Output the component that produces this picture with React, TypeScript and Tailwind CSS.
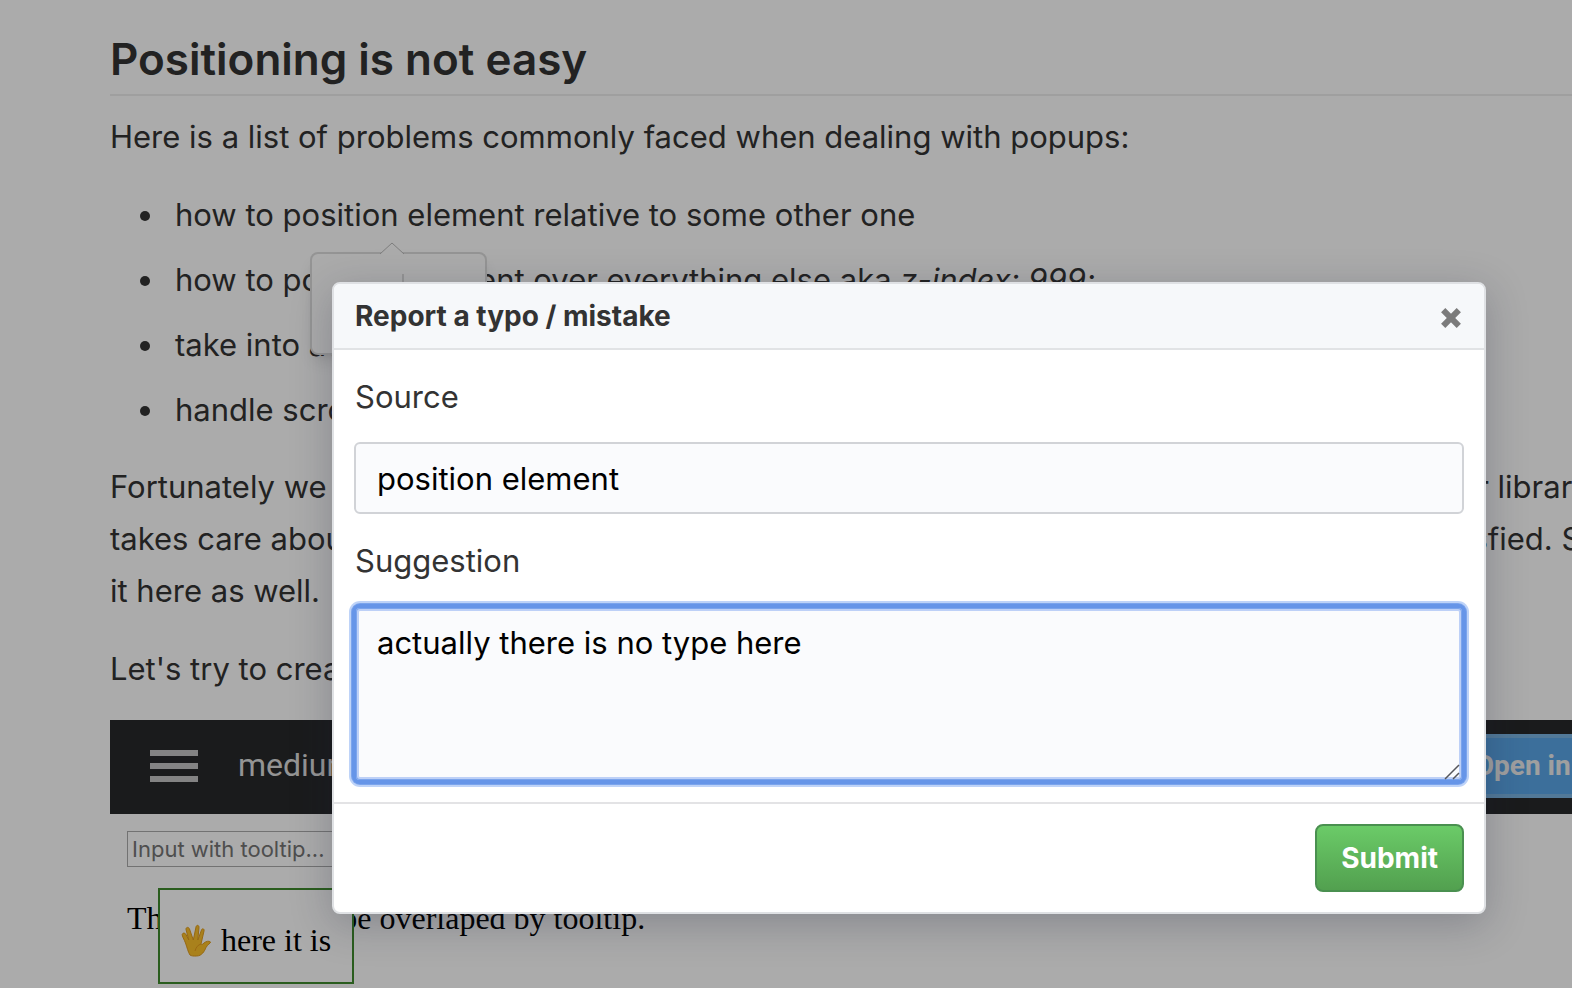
import React from "react";

function Hand() {
  return (
    <svg viewBox="0 0 30 33" className="h-[33px] w-[30px] shrink-0" role="img" aria-label="Vulcan salute">
      <path
        d="M9 31C7 28 6 23 4.500 19C3.200 15.500 1 12 1.200 10.500C1.800 8.500 4 8.800 5 10.500L7.800 16L5 5.500C4.700 3 7.600 2.600 8.500 5L12.300 16L15 3C15.500 .5 18.200 1 18 3.500L16.800 16L20.500 6C21.300 3.800 23.600 4.800 23 7L20 20C20.500 21 21.500 20.500 23 19C25 17.300 28 16.500 29.500 18C29.500 19.500 26.500 20.500 25 23.500C23.500 27 21 32 15.500 32C12.500 32.200 10.500 32 9 31Z"
        fill="#fdc02b"
        stroke="#e09c1c"
        strokeWidth="1"
      />
      <path d="M14 27C15 23 17 21 20 20" stroke="#e79e1d" strokeWidth="1" fill="none" />
    </svg>
  );
}

function Article() {
  return (
    <main className="h-full overflow-hidden bg-white pt-8 pl-[110px] font-[Inter,sans-serif] text-[31px] leading-[52px] whitespace-nowrap text-[#333]">
      <h2 className="border-b-2 border-[#eee] pb-2 text-[44px] leading-[54px] font-semibold">Positioning is not easy</h2>
      <p className="mt-[15px]">Here is a list of problems commonly faced when dealing with popups:</p>
      <ul className="mt-[26px] flex list-disc flex-col gap-[13px] pl-[57px]">
        <li className="pl-2">how to position element relative to some other one</li>
        <li className="pl-2">
          how to position element over everything else aka <em>z-index: 999;</em>
        </li>
        <li className="pl-2">take into account screen boundaries</li>
        <li className="pl-2">handle scroll and resize events</li>
      </ul>
      <p className="mt-[25px]">
        Fortunately we live in the world where all these problems are already solved by a small popper library that
        <br />
        takes care about all of them for us and after using it in many projects I am still completely satisfied. So let us use
        <br />
        it here as well.
      </p>
      <p className="mt-[26px]">Let's try to create a simple tooltip:</p>
      <section>
        <header className="mt-[25px] flex h-[94px] items-center bg-[#27292a] pb-[2px] pl-10 font-[Roboto,sans-serif]">
          <button aria-label="Open menu" className="flex w-12 flex-col gap-[7px]">
            <span className="h-[6px] w-full bg-[#c4c4c4]" />
            <span className="h-[6px] w-full bg-[#c4c4c4]" />
            <span className="h-[6px] w-full bg-[#c4c4c4]" />
          </button>
          <span className="ml-10 flex-1 text-[32px] leading-[48px]">
            <span className="block pb-[2px] text-[#ddd]">medium-tooltip</span>
          </span>
          <a href="#sandbox" className="-mr-32 flex h-16 items-center border-4 border-[#7bb5e3] bg-[#5aa6e8] px-3 text-[28px] font-bold text-[#eee]">
            Open in sandbox
          </a>
        </header>
        <div className="relative flex flex-col items-start pt-[17px] pl-[17px] font-['Liberation_Serif',serif] text-[32px] leading-9 text-black">
          <input
            aria-label="Input with tooltip"
            placeholder="Input with tooltip..."
            className="h-9 w-[290px] border border-[#aaa] bg-white px-1 font-[Inter,sans-serif] text-[22px] placeholder:text-[#757575]"
          />
          <p className="mt-[33px]">This text should be overlaped by tooltip.</p>
          <div className="absolute top-[74px] left-12 flex h-24 items-center gap-[10px] border-2 border-[#3f8b2e] bg-white px-[21px] pt-2">
            <Hand />
            here it is
          </div>
        </div>
      </section>
    </main>
  );
}

function SelectionPopover() {
  return (
    <div className="absolute top-[252px] left-[310px] flex h-[103px] w-[177px] justify-center rounded-lg border-2 border-[#ddd] bg-white pt-5 shadow-lg">
      <svg viewBox="0 0 24 13" className="absolute -top-3 left-[68px] h-[13px] w-6">
        <path d="M0 12L12 1L24 12V13H0Z" fill="#fff" />
        <path d="M0 12L12 1L24 12" fill="none" stroke="#bbb" />
      </svg>
      <span className="ml-2 h-14 w-[2px] bg-[#ddd]" />
    </div>
  );
}

function ReportDialog() {
  return (
    <form
      role="dialog"
      aria-labelledby="report-title"
      onSubmit={(e) => e.preventDefault()}
      className="rounded-lg border-2 border-[#dfe1e4] bg-white text-[#333] shadow-[0_10px_40px_rgba(27,31,55,0.25)]"
    >
      <header className="flex h-[66px] items-center justify-between rounded-t-md border-b-2 border-[#e1e3e5] bg-[#f6f8fa] px-[21px]">
        <h3 id="report-title" className="text-[28px] leading-10 font-bold">Report a typo / mistake</h3>
        <button type="button" aria-label="Close" className="pt-1">
          <svg viewBox="0 0 24 24" className="size-6">
            <path d="M4.200 4.200L19.800 19.800M19.800 4.200L4.200 19.800" stroke="#7b7b7b" strokeWidth="6" />
          </svg>
        </button>
      </header>
      <div className="flex flex-col px-5 pt-[21px] pb-5">
        <label htmlFor="source" className="pl-px leading-[52px]">Source</label>
        <input
          id="source"
          defaultValue="position element"
          className="mt-[19px] h-[72px] rounded-md border-2 border-[#d1d3d7] bg-[#fafbfd] px-[21px] text-black"
        />
        <label htmlFor="suggestion" className="mt-[21px] pl-px leading-[52px]">Suggestion</label>
        <div className="relative mt-[19px] flex">
          <textarea
            id="suggestion"
            defaultValue="actually there is no type here"
            className="h-[176px] w-full resize-none rounded-md border-2 border-[#6695e8] bg-[#fafbfd] px-[21px] py-[9px] leading-[52px] text-black shadow-[inset_0_0_0_1px_#7ba4ec,inset_0_0_0_3px_#bdd0f7,0_0_0_2px_#6695e8,0_0_0_3px_#7ba4ec,0_0_0_5px_#bed3f8] outline-none"
          />
          <svg viewBox="0 0 16 16" className="absolute right-1 bottom-[2px] size-4">
            <path d="M1 15L15 1M9 15L15 9" stroke="#55565c" strokeWidth="1.500" fill="none" />
          </svg>
        </div>
      </div>
      <footer className="flex justify-end border-t-2 border-[#e3e3e5] p-5">
        <button className="h-[68px] rounded-lg border-2 border-[#4a9050] bg-linear-to-b from-[#6bcb68] to-[#52a04f] px-6 text-[28px] font-bold text-white">
          Submit
        </button>
      </footer>
    </form>
  );
}

export default function App() {
  return (
    <div className="relative h-screen overflow-hidden">
      <Article />
      <SelectionPopover />
      <div className="absolute inset-0 bg-black/33 pt-[282px] pr-[86px] pl-[332px] font-[Inter,sans-serif] text-[31px]">
        <ReportDialog />
      </div>
    </div>
  );
}
